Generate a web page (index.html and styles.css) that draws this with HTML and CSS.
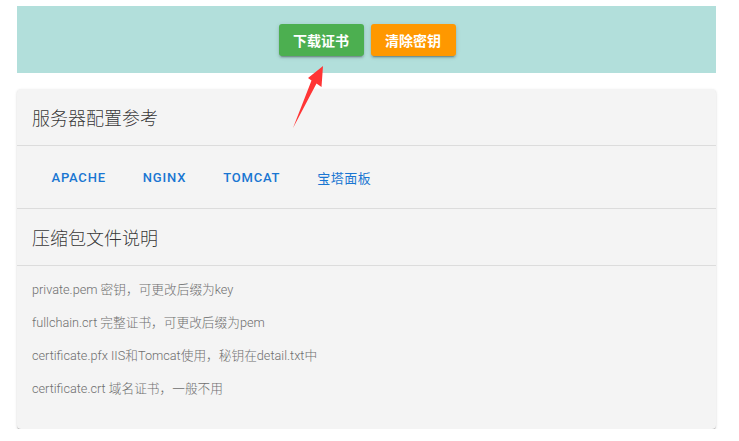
FILE: index.html
```html
<!DOCTYPE html>
<html lang="zh">
<head>
<meta charset="utf-8">
<link rel="stylesheet" href="styles.css">
</head>
<body>
<div class="page">
  <div class="toolbar">
    <button class="btn btn-green">下载证书</button>
    <button class="btn btn-orange">清除密钥</button>
  </div>
  <div class="card">
    <div class="card-title">服务器配置参考</div>
    <div class="tabs">
      <span class="tab">APACHE</span>
      <span class="tab">NGINX</span>
      <span class="tab">TOMCAT</span>
      <span class="tab tab-cjk">宝塔面板</span>
    </div>
    <div class="card-title">压缩包文件说明</div>
    <div class="card-body">
      <p>private.pem 密钥，可更改后缀为key</p>
      <p>fullchain.crt 完整证书，可更改后缀为pem</p>
      <p>certificate.pfx IIS和Tomcat使用，秘钥在detail.txt中</p>
      <p>certificate.crt 域名证书，一般不用</p>
    </div>
  </div>
  <svg class="arrow" width="40" height="70" viewBox="288 62 40 70">
    <polygon points="323,66 321.5,87 316.5,83.5 293,128 311.5,80.5 308,78" fill="#ff3535"/>
  </svg>
</div>
</body>
</html>
```
FILE: styles.css
```css
* { box-sizing: border-box; }
html, body { margin: 0; padding: 0; background: #fff; }
body {
  font-family: Roboto, "Noto Sans CJK SC", sans-serif;
}
.page {
  position: relative;
  padding: 6px 23px 0 17px;
  width: 739px;
}
.toolbar {
  height: 67px;
  background: #b2dfdb;
  display: flex;
  justify-content: center;
  align-items: center;
  gap: 7px;
  padding-left: 1px;
}
.btn {
  height: 32px;
  width: 85px;
  border: none;
  border-radius: 3px;
  color: #fff;
  font-family: Roboto, "Noto Sans CJK SC", sans-serif;
  font-size: 14px;
  font-weight: 700;
  box-shadow: 0 3px 1px -2px rgba(0,0,0,.2), 0 2px 2px 0 rgba(0,0,0,.14), 0 1px 5px 0 rgba(0,0,0,.12);
  margin-top: 1px;
}
.btn-green { background: #4caf50; }
.btn-orange { background: #ff9800; }
.card {
  margin-top: 16px;
  background: #f4f4f4;
  border-radius: 4px;
  box-shadow: 0 2px 1px -1px rgba(0,0,0,.2), 0 1px 1px 0 rgba(0,0,0,.14), 0 1px 3px 0 rgba(0,0,0,.12);
}
.card-title {
  height: 57px;
  display: flex;
  align-items: center;
  padding-left: 15px;
  font-size: 18px;
  font-weight: 300;
  color: rgba(0,0,0,.8);
  border-bottom: 1px solid #dcdcdc;
}
.tabs {
  height: 63px;
  display: flex;
  align-items: center;
  padding-left: 16px;
  border-bottom: 1px solid #dcdcdc;
}
.tab {
  padding: 0 18.5px;
  font-size: 13px;
  font-weight: 500;
  letter-spacing: 0.8px;
  color: #1976d2;
}
.tab-cjk {
  font-weight: 400;
  letter-spacing: 0.5px;
}
.card-body {
  padding: 14px 15px 30px;
}
.card-body p {
  margin: 0 0 13px;
  font-size: 12.7px;
  font-weight: 300;
  line-height: 20px;
  color: #6f6f6f;
}
.card-body p:last-child { margin-bottom: 0; }
.arrow {
  position: absolute;
  left: 288px;
  top: 62px;
}
```
